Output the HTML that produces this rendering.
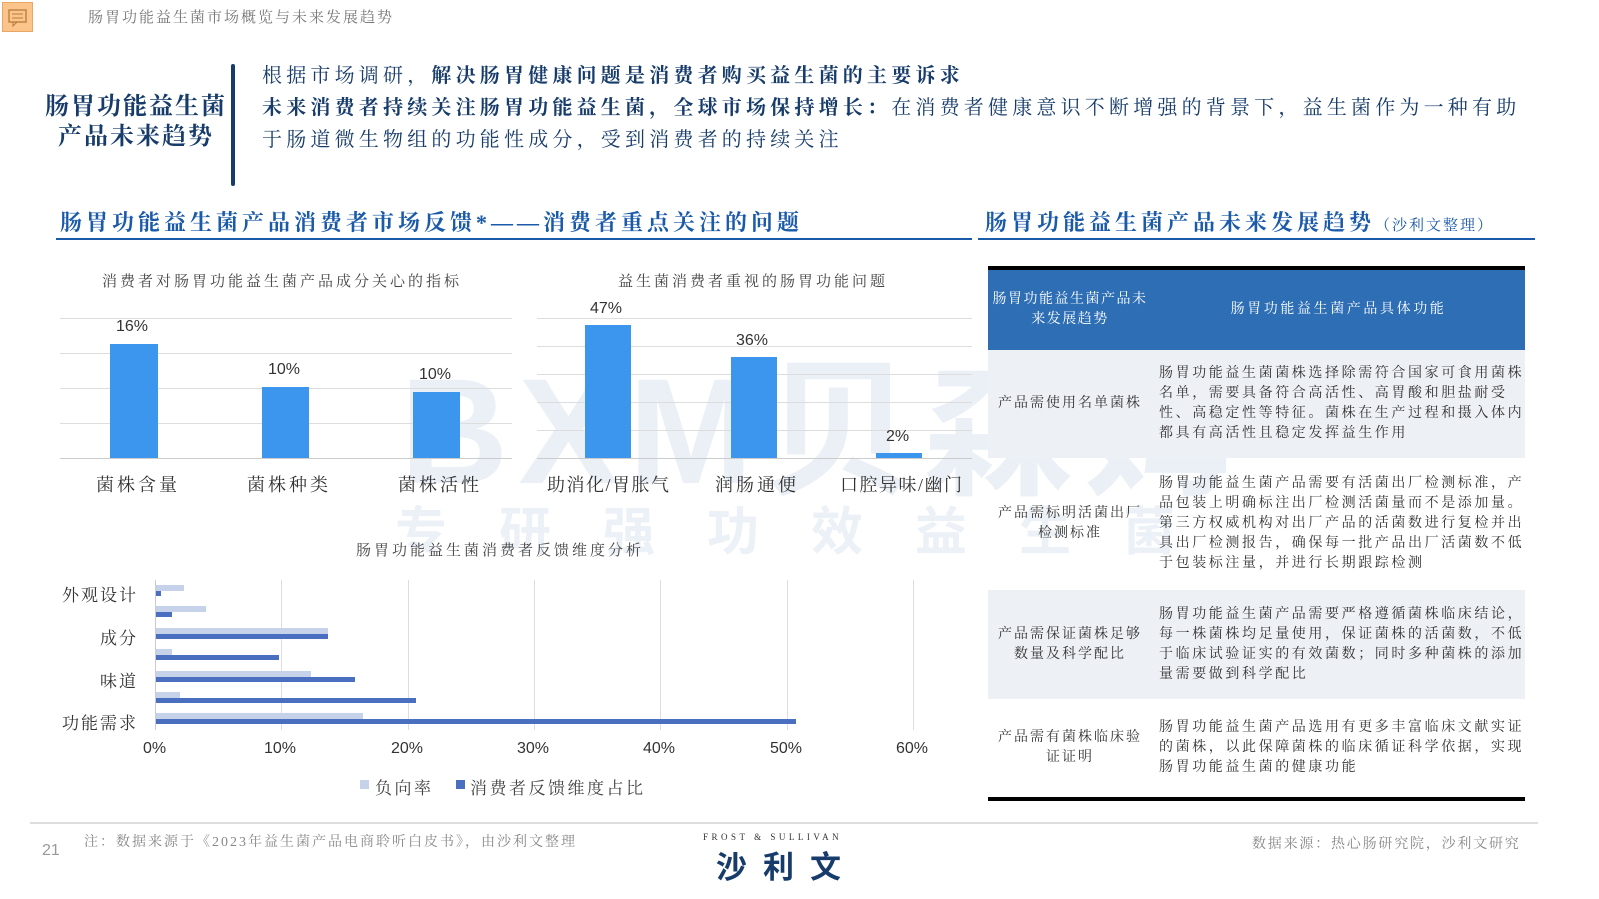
<!DOCTYPE html>
<html><head><meta charset="utf-8"><style>
*{margin:0;padding:0;box-sizing:border-box}
body{width:1599px;height:899px;background:#fff;position:relative;overflow:hidden;font-family:"Liberation Serif","Noto Serif CJK SC",serif;color:#333}
.a{position:absolute;white-space:nowrap}
.s{font-family:"Liberation Sans","Noto Sans CJK SC",sans-serif}
.blue{color:#1a5aa8}
.navy{color:#173c6b}
.g{background:#ddd;height:1px;position:absolute}
.bar{position:absolute;background:#3c96ee}
.hb{position:absolute}
.l{background:#c6d1ea}.d{background:#4a6fc0}
.cell{position:absolute;display:flex;align-items:center;font-size:14px;line-height:20px;color:#333}
.t{letter-spacing:2.6px}
</style></head><body>
<div class="a" style="left:2px;top:2px;width:31px;height:30px;background:#fbc48a;border:1px solid #e8a766"></div>
<svg class="a" style="left:8px;top:9px" width="20" height="18"><rect x="1" y="1" width="17" height="12" fill="none" stroke="#b97a3a" stroke-width="1.3"/><line x1="4" y1="5" x2="15" y2="5" stroke="#b97a3a"/><line x1="4" y1="9" x2="15" y2="9" stroke="#b97a3a"/><path d="M5 13 L5 17 L9 13" fill="none" stroke="#b97a3a"/></svg>
<div class="a" style="left:88px;top:6px;font-size:15px;color:#777;letter-spacing:2px">肠胃功能益生菌市场概览与未来发展趋势</div>

<div class="a navy" style="left:42px;top:92px;font-size:24px;font-weight:bold;line-height:30px;text-align:center;width:188px;letter-spacing:2px">肠胃功能益生菌<br>产品未来趋势</div>
<div class="a" style="left:231px;top:64px;width:4px;height:122px;background:#173c6b;border-radius:2px"></div>
<div class="a navy" style="left:262px;top:60px;font-size:20px;line-height:32px;letter-spacing:4.2px;white-space:normal;width:1275px">根据市场调研，<b>解决肠胃健康问题是消费者购买益生菌的主要诉求</b><br><b>未来消费者持续关注肠胃功能益生菌，全球市场保持增长：</b>在消费者健康意识不断增强的背景下，益生菌作为一种有助于肠道微生物组的功能性成分，受到消费者的持续关注</div>

<div class="a blue" style="left:60px;top:206px;font-size:22px;font-weight:bold;letter-spacing:4px">肠胃功能益生菌产品消费者市场反馈*——消费者重点关注的问题</div>
<div class="a" style="left:56px;top:238px;width:916px;height:2px;background:#1a5aa8"></div>
<div class="a blue" style="left:985px;top:206px;font-size:22px;font-weight:bold;letter-spacing:4px">肠胃功能益生菌产品未来发展趋势<span style="font-size:15px;font-weight:normal;letter-spacing:2px">（沙利文整理）</span></div>
<div class="a" style="left:978px;top:238px;width:557px;height:2px;background:#1a5aa8"></div>

<div class="a s" style="left:400px;top:310px;font-size:150px;font-weight:bold;color:rgba(160,185,215,0.22);letter-spacing:10px">BXM贝森姆</div>
<div class="a s" style="left:395px;top:490px;font-size:52px;font-weight:bold;color:rgba(160,185,215,0.2);letter-spacing:52px">专研强功效益生菌</div>

<div class="a" style="left:102px;top:270px;font-size:15px;color:#444;letter-spacing:3px">消费者对肠胃功能益生菌产品成分关心的指标</div>
<div class="g" style="left:60px;width:452px;top:318px"></div>
<div class="g" style="left:60px;width:452px;top:353px"></div>
<div class="g" style="left:60px;width:452px;top:388px"></div>
<div class="g" style="left:60px;width:452px;top:423px"></div>
<div class="g" style="left:60px;width:452px;top:458px;background:#ccc"></div>
<div class="bar" style="left:110px;width:48px;top:344px;height:114px"></div>
<div class="bar" style="left:262px;width:47px;top:387px;height:71px"></div>
<div class="bar" style="left:413px;width:47px;top:392px;height:66px"></div>
<div class="a s" style="left:116px;top:318px;font-size:16px">16%</div>
<div class="a s" style="left:268px;top:361px;font-size:16px">10%</div>
<div class="a s" style="left:419px;top:366px;font-size:16px">10%</div>
<div class="a" style="left:96px;top:471px;font-size:18px;letter-spacing:3px">菌株含量</div>
<div class="a" style="left:247px;top:471px;font-size:18px;letter-spacing:3px">菌株种类</div>
<div class="a" style="left:398px;top:471px;font-size:18px;letter-spacing:3px">菌株活性</div>

<div class="a" style="left:618px;top:270px;font-size:15px;color:#444;letter-spacing:3px">益生菌消费者重视的肠胃功能问题</div>
<div class="g" style="left:537px;width:435px;top:318px"></div>
<div class="g" style="left:537px;width:435px;top:346px"></div>
<div class="g" style="left:537px;width:435px;top:374px"></div>
<div class="g" style="left:537px;width:435px;top:402px"></div>
<div class="g" style="left:537px;width:435px;top:430px"></div>
<div class="g" style="left:537px;width:435px;top:458px;background:#ccc"></div>
<div class="bar" style="left:585px;width:46px;top:325px;height:133px"></div>
<div class="bar" style="left:731px;width:46px;top:357px;height:101px"></div>
<div class="bar" style="left:876px;width:46px;top:453px;height:5px"></div>
<div class="a s" style="left:590px;top:300px;font-size:16px">47%</div>
<div class="a s" style="left:736px;top:332px;font-size:16px">36%</div>
<div class="a s" style="left:886px;top:428px;font-size:16px">2%</div>
<div class="a" style="left:547px;top:471px;font-size:18px;letter-spacing:1.5px">助消化/胃胀气</div>
<div class="a" style="left:715px;top:471px;font-size:18px;letter-spacing:3px">润肠通便</div>
<div class="a" style="left:840px;top:471px;font-size:18px;letter-spacing:1.5px">口腔异味/幽门</div>

<div class="a" style="left:356px;top:539px;font-size:15px;color:#444;letter-spacing:3px">肠胃功能益生菌消费者反馈维度分析</div>
<div class="a" style="left:155px;top:580px;width:1px;height:150px;background:#ccc"></div>
<div class="a" style="left:281px;top:580px;width:1px;height:150px;background:#ddd"></div>
<div class="a" style="left:408px;top:580px;width:1px;height:150px;background:#ddd"></div>
<div class="a" style="left:534px;top:580px;width:1px;height:150px;background:#ddd"></div>
<div class="a" style="left:660px;top:580px;width:1px;height:150px;background:#ddd"></div>
<div class="a" style="left:787px;top:580px;width:1px;height:150px;background:#ddd"></div>
<div class="a" style="left:913px;top:580px;width:1px;height:150px;background:#ddd"></div>
<div class="hb l" style="left:156px;top:585px;width:28px;height:6px"></div>
<div class="hb d" style="left:156px;top:591px;width:5px;height:5px"></div>
<div class="hb l" style="left:156px;top:606px;width:50px;height:6px"></div>
<div class="hb d" style="left:156px;top:612px;width:16px;height:5px"></div>
<div class="hb l" style="left:156px;top:628px;width:172px;height:6px"></div>
<div class="hb d" style="left:156px;top:634px;width:172px;height:5px"></div>
<div class="hb l" style="left:156px;top:649px;width:16px;height:6px"></div>
<div class="hb d" style="left:156px;top:655px;width:123px;height:5px"></div>
<div class="hb l" style="left:156px;top:671px;width:155px;height:6px"></div>
<div class="hb d" style="left:156px;top:677px;width:199px;height:5px"></div>
<div class="hb l" style="left:156px;top:692px;width:24px;height:6px"></div>
<div class="hb d" style="left:156px;top:698px;width:260px;height:5px"></div>
<div class="hb l" style="left:156px;top:713px;width:207px;height:6px"></div>
<div class="hb d" style="left:156px;top:719px;width:640px;height:5px"></div>
<div class="a" style="left:62px;top:581px;font-size:17px;letter-spacing:2px">外观设计</div>
<div class="a" style="left:100px;top:624px;font-size:17px;letter-spacing:2px">成分</div>
<div class="a" style="left:100px;top:667px;font-size:17px;letter-spacing:2px">味道</div>
<div class="a" style="left:62px;top:709px;font-size:17px;letter-spacing:2px">功能需求</div>
<div class="a s" style="left:143px;top:740px;font-size:16px">0%</div>
<div class="a s" style="left:264px;top:740px;font-size:16px">10%</div>
<div class="a s" style="left:391px;top:740px;font-size:16px">20%</div>
<div class="a s" style="left:517px;top:740px;font-size:16px">30%</div>
<div class="a s" style="left:643px;top:740px;font-size:16px">40%</div>
<div class="a s" style="left:770px;top:740px;font-size:16px">50%</div>
<div class="a s" style="left:896px;top:740px;font-size:16px">60%</div>
<div class="a" style="left:360px;top:780px;width:9px;height:9px;background:#c6d1ea"></div>
<div class="a" style="left:375px;top:774px;font-size:17px;letter-spacing:2.5px;color:#444">负向率</div>
<div class="a" style="left:456px;top:780px;width:9px;height:9px;background:#4a6fc0"></div>
<div class="a" style="left:470px;top:774px;font-size:17px;letter-spacing:2.5px;color:#444">消费者反馈维度占比</div>

<div class="a" style="left:988px;top:266px;width:537px;height:4px;background:#000"></div>
<div class="a" style="left:988px;top:270px;width:537px;height:80px;background:#2e6eb5"></div>
<div class="cell t" style="left:988px;top:270px;width:164px;height:80px;color:#fff;justify-content:center;text-align:center;letter-spacing:1.5px">肠胃功能益生菌产品未<br>来发展趋势</div>
<div class="cell t" style="left:1152px;top:270px;width:373px;height:80px;color:#fff;justify-content:center">肠胃功能益生菌产品具体功能</div>
<div class="a" style="left:988px;top:350px;width:537px;height:108px;background:#edf0f5"></div>
<div class="a" style="left:988px;top:590px;width:537px;height:109px;background:#edf0f5"></div>
<div class="cell t" style="left:988px;top:350px;width:164px;height:108px;justify-content:center;text-align:center;letter-spacing:2px">产品需使用名单菌株</div>
<div class="cell t" style="left:1159px;top:350px;width:372px;height:108px;white-space:normal">肠胃功能益生菌菌株选择除需符合国家可食用菌株名单，需要具备符合高活性、高胃酸和胆盐耐受性、高稳定性等特征。菌株在生产过程和摄入体内都具有高活性且稳定发挥益生作用</div>
<div class="cell t" style="left:988px;top:458px;width:164px;height:132px;justify-content:center;text-align:center;letter-spacing:2px">产品需标明活菌出厂<br>检测标准</div>
<div class="cell t" style="left:1159px;top:458px;width:372px;height:132px;white-space:normal">肠胃功能益生菌产品需要有活菌出厂检测标准，产品包装上明确标注出厂检测活菌量而不是添加量。第三方权威机构对出厂产品的活菌数进行复检并出具出厂检测报告，确保每一批产品出厂活菌数不低于包装标注量，并进行长期跟踪检测</div>
<div class="cell t" style="left:988px;top:590px;width:164px;height:109px;justify-content:center;text-align:center;letter-spacing:2px">产品需保证菌株足够<br>数量及科学配比</div>
<div class="cell t" style="left:1159px;top:590px;width:372px;height:109px;white-space:normal">肠胃功能益生菌产品需要严格遵循菌株临床结论，每一株菌株均足量使用，保证菌株的活菌数，不低于临床试验证实的有效菌数；同时多种菌株的添加量需要做到科学配比</div>
<div class="cell t" style="left:988px;top:699px;width:164px;height:98px;justify-content:center;text-align:center;letter-spacing:2px">产品需有菌株临床验<br>证证明</div>
<div class="cell t" style="left:1159px;top:699px;width:372px;height:98px;white-space:normal">肠胃功能益生菌产品选用有更多丰富临床文献实证的菌株，以此保障菌株的临床循证科学依据，实现肠胃功能益生菌的健康功能</div>
<div class="a" style="left:988px;top:797px;width:537px;height:4px;background:#000"></div>

<div class="a" style="left:30px;top:822px;width:1508px;height:2px;background:#ddd"></div>
<div class="a s" style="left:42px;top:842px;font-size:16px;color:#999">21</div>
<div class="a" style="left:84px;top:831px;font-size:14px;color:#888;letter-spacing:2px">注：数据来源于《2023年益生菌产品电商聆听白皮书》，由沙利文整理</div>
<div class="a" style="left:703px;top:832px;font-size:9px;color:#333;letter-spacing:3.5px">FROST &amp; SULLIVAN</div>
<div class="a s" style="left:716px;top:842px;font-size:31px;font-weight:bold;color:#173c6b;letter-spacing:16px">沙利文</div>
<div class="a" style="left:1252px;top:833px;font-size:14px;color:#888;letter-spacing:1.8px">数据来源：热心肠研究院，沙利文研究</div>
</body></html>
